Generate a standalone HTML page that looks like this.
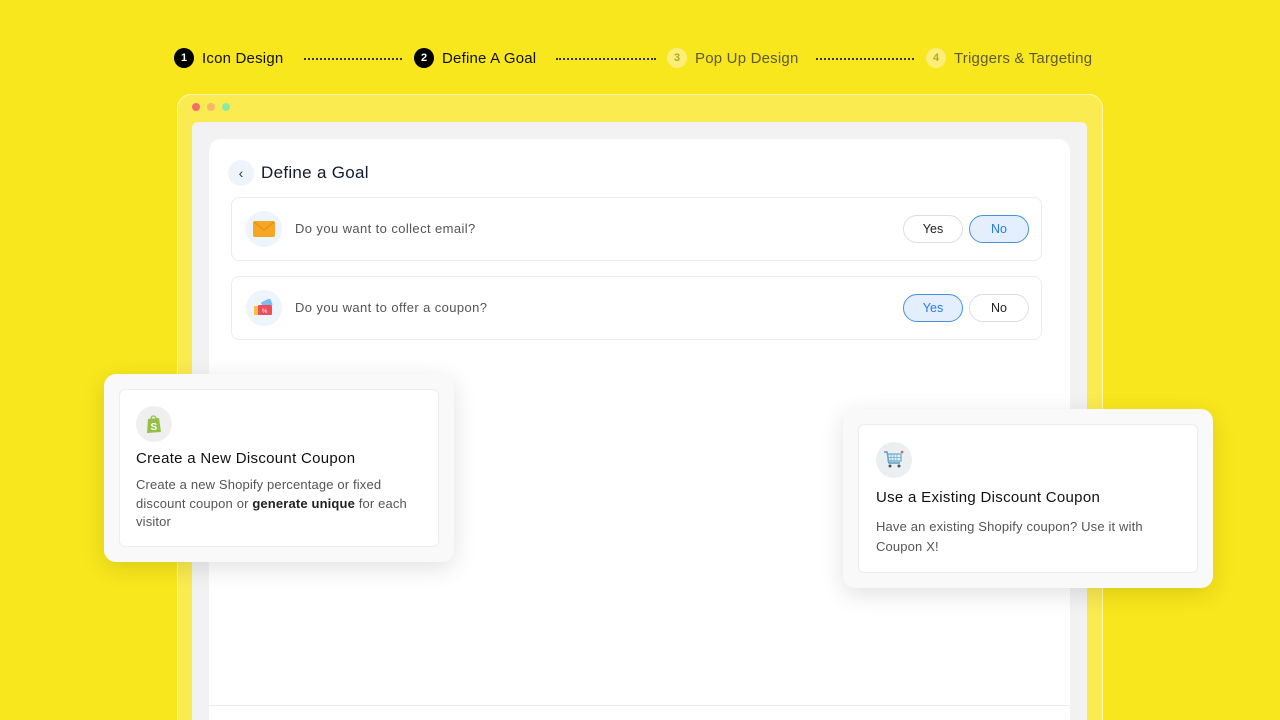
<!DOCTYPE html>
<html><head><meta charset="utf-8"><style>
*{box-sizing:border-box;margin:0;padding:0}
html,body{width:1280px;height:720px;overflow:hidden}
body{background:#f8e71c;font-family:"Liberation Sans",sans-serif;position:relative}
.a{position:absolute}
.step{position:absolute;top:48px;height:20px;display:flex;align-items:center;font-size:15px;color:#111;letter-spacing:.2px}
.num{width:20px;height:20px;border-radius:50%;background:#000;color:#fff;font-size:11px;font-weight:bold;display:flex;align-items:center;justify-content:center;margin-right:8px;letter-spacing:0}
.num.off{background:#fbef77;color:#b5a52c}
.step.off{color:#5c5a3a}
.dots{position:absolute;top:58px;border-top:2px dotted #333;height:0}
.row{position:absolute;left:231px;width:811px;height:64px;border:1px solid #ececec;border-radius:8px;background:#fff}
.ic{position:absolute;width:36px;height:36px;border-radius:50%;background:#eef4fc;display:flex;align-items:center;justify-content:center}
.q{position:absolute;left:63px;top:23px;font-size:13px;color:#555;letter-spacing:.4px}
.btn{position:absolute;top:17px;width:60px;height:28px;border-radius:14px;border:1px solid #ddd;background:#fff;font-size:12.5px;color:#222;display:flex;align-items:center;justify-content:center}
.btn.on{background:#e3effd;border-color:#4a90e2;color:#2b7be0}
.outer{position:absolute;background:#f9f9f9;border-radius:12px;box-shadow:0 6px 24px rgba(0,0,0,.12)}
.inner{position:absolute;left:15px;top:15px;right:15px;bottom:15px;background:#fff;border:1px solid #ededed;border-radius:6px}
.ct{position:absolute;font-size:15px;color:#111;letter-spacing:.3px}
.cd{position:absolute;font-size:13px;color:#555;line-height:18.5px;letter-spacing:.15px}
</style></head><body>
<div class="step" style="left:174px"><div class="num">1</div>Icon Design</div>
<div class="dots" style="left:304px;width:98px"></div>
<div class="step" style="left:414px"><div class="num">2</div>Define A Goal</div>
<div class="dots" style="left:556px;width:100px"></div>
<div class="step off" style="left:667px"><div class="num off">3</div>Pop Up Design</div>
<div class="dots" style="left:816px;width:98px"></div>
<div class="step off" style="left:926px"><div class="num off">4</div>Triggers &amp; Targeting</div>

<div class="a" style="left:177px;top:94px;width:926px;height:640px;background:#faeb50;border:1px solid #fdf6b0;border-radius:14px"></div>
<div class="a" style="left:192px;top:103px;width:8px;height:8px;border-radius:50%;background:#f66b6b"></div>
<div class="a" style="left:207px;top:103px;width:8px;height:8px;border-radius:50%;background:#f8b66b"></div>
<div class="a" style="left:222px;top:103px;width:8px;height:8px;border-radius:50%;background:#8eeaa3"></div>
<div class="a" style="left:192px;top:122px;width:895px;height:610px;background:#f2f2f2;border-radius:6px"></div>
<div class="a" style="left:209px;top:139px;width:861px;height:600px;background:#fff;border-radius:12px"></div>
<div class="a" style="left:209px;top:705px;width:861px;height:1px;background:#ececec"></div>

<div class="a" style="left:228px;top:160px;width:26px;height:26px;border-radius:50%;background:#eef4fc;color:#334;font-size:14px;display:flex;align-items:center;justify-content:center">‹</div>
<div class="a" style="left:261px;top:163px;font-size:17px;color:#151a2e;letter-spacing:.3px">Define a Goal</div>

<div class="row" style="top:197px">
 <div class="ic" style="left:14px;top:13px"><svg width="22" height="16"><rect x="0" y="0" width="22" height="16" rx="2" fill="#f5a623"/><path d="M1 1 L11 9 L21 1" stroke="#e8951a" fill="none" stroke-width="1.5"/></svg></div>
 <div class="q">Do you want to collect email?</div>
 <div class="btn" style="left:671px">Yes</div><div class="btn on" style="left:737px">No</div>
</div>
<div class="row" style="top:276px">
 <div class="ic" style="left:14px;top:13px"><svg width="20" height="18"><rect x="8" y="1" width="10" height="7" rx="1" fill="#7bbdf0" transform="rotate(-25 13 5)"/><rect x="0" y="7" width="6" height="9" fill="#f6c244"/><rect x="4" y="6" width="14" height="10" rx="1" fill="#ee4d5a"/><text x="8" y="14" font-size="6" fill="#fff">%</text></svg></div>
 <div class="q">Do you want to offer a coupon?</div>
 <div class="btn on" style="left:671px">Yes</div><div class="btn" style="left:737px">No</div>
</div>

<div class="outer" style="left:104px;top:374px;width:350px;height:188px"><div class="inner">
 <div class="ic" style="left:16px;top:16px;background:#efefef"><svg width="16" height="19" viewBox="0 0 16 19"><path d="M2 4 L13 3 L15 17 L1 18 Z" fill="#95bf47"/><path d="M5 4 C5 0 10 0 10 4" stroke="#95bf47" fill="none" stroke-width="1.3"/><text x="4.5" y="15" font-size="10" font-weight="bold" fill="#fff">S</text></svg></div>
 <div class="ct" style="left:16px;top:60px">Create a New Discount Coupon</div>
 <div class="cd" style="left:16px;top:86px;width:292px">Create a new Shopify percentage or fixed<br>discount coupon or <b style="color:#222">generate unique</b> for each<br>visitor</div>
</div></div>

<div class="outer" style="left:843px;top:409px;width:370px;height:179px"><div class="inner">
 <div class="ic" style="left:17px;top:17px;background:#eceff1"><svg width="22" height="20" viewBox="0 0 22 20"><path d="M1 2 L4 2 L6 13 L17 13" stroke="#5b9bbf" fill="none" stroke-width="1.5"/><rect x="5" y="4" width="13" height="7" fill="none" stroke="#6aaed0" stroke-width="1.3"/><path d="M8 4v7M11 4v7M14 4v7M5 7.5h13" stroke="#6aaed0" stroke-width=".8"/><circle cx="7" cy="16" r="1.5" fill="#456"/><circle cx="16" cy="16" r="1.5" fill="#456"/><circle cx="19" cy="2" r="1.3" fill="#e55"/></svg></div>
 <div class="ct" style="left:17px;top:64px">Use a Existing Discount Coupon</div>
 <div class="cd" style="left:17px;top:92px;width:310px;line-height:19.5px">Have an existing Shopify coupon? Use it with<br>Coupon X!</div>
</div></div>
</body></html>
